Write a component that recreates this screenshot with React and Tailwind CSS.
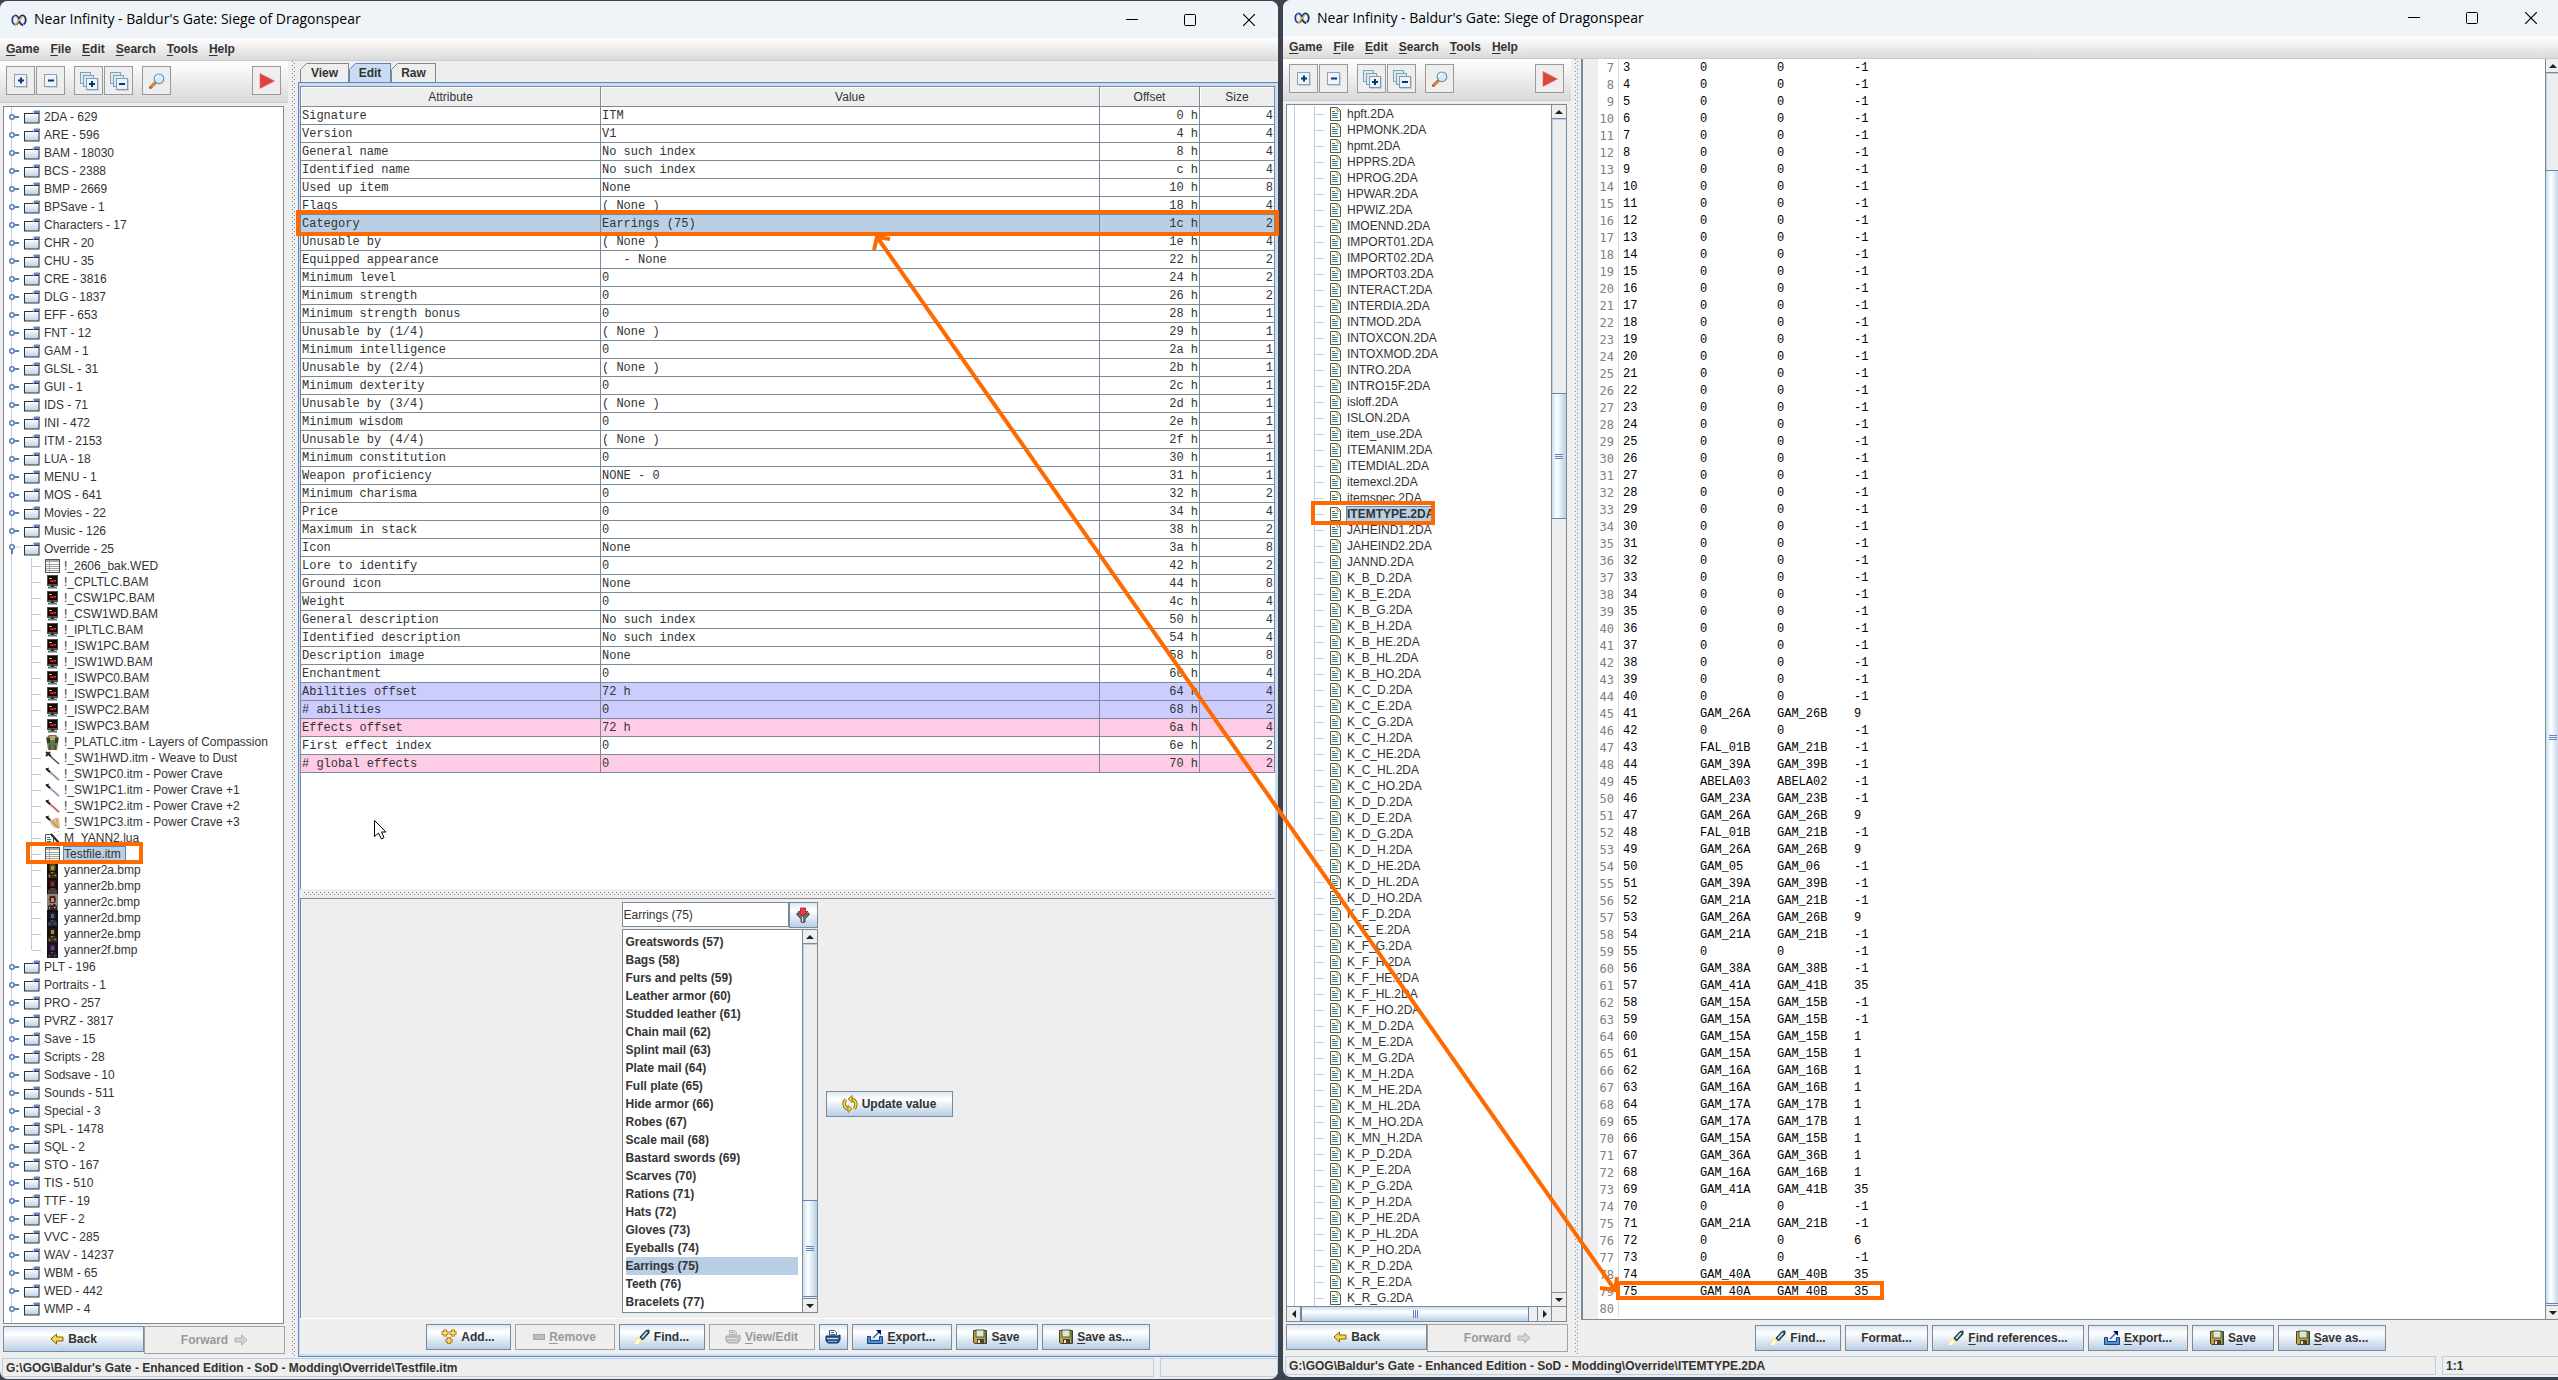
import React from "react";

/* ---------- data ---------- */

const foldersBefore = [
  "2DA - 629", "ARE - 596", "BAM - 18030", "BCS - 2388", "BMP - 2669", "BPSave - 1",
  "Characters - 17", "CHR - 20", "CHU - 35", "CRE - 3816", "DLG - 1837", "EFF - 653",
  "FNT - 12", "GAM - 1", "GLSL - 31", "GUI - 1", "IDS - 71", "INI - 472", "ITM - 2153",
  "LUA - 18", "MENU - 1", "MOS - 641", "Movies - 22", "Music - 126",
];

const foldersAfter = [
  "PLT - 196", "Portraits - 1", "PRO - 257", "PVRZ - 3817", "Save - 15", "Scripts - 28",
  "Sodsave - 10", "Sounds - 511", "Special - 3", "SPL - 1478", "SQL - 2", "STO - 167",
  "TIS - 510", "TTF - 19", "VEF - 2", "VVC - 285", "WAV - 14237", "WBM - 65", "WED - 442",
  "WMP - 4",
];

const overrideFiles = [
  ["grid", "!_2606_bak.WED"],
  ["bam", "!_CPLTLC.BAM"],
  ["bam", "!_CSW1PC.BAM"],
  ["bam", "!_CSW1WD.BAM"],
  ["bam", "!_IPLTLC.BAM"],
  ["bam", "!_ISW1PC.BAM"],
  ["bam", "!_ISW1WD.BAM"],
  ["bam", "!_ISWPC0.BAM"],
  ["bam", "!_ISWPC1.BAM"],
  ["bam", "!_ISWPC2.BAM"],
  ["bam", "!_ISWPC3.BAM"],
  ["armor", "!_PLATLC.itm - Layers of Compassion"],
  ["dagger", "!_SW1HWD.itm - Weave to Dust"],
  ["sword", "!_SW1PC0.itm - Power Crave"],
  ["swordBlue", "!_SW1PC1.itm - Power Crave +1"],
  ["swordRed", "!_SW1PC2.itm - Power Crave +2"],
  ["swordFire", "!_SW1PC3.itm - Power Crave +3"],
  ["script", "M_YANN2.lua"],
  ["grid", "Testfile.itm"],
  ["faceA", "yanner2a.bmp"],
  ["faceB", "yanner2b.bmp"],
  ["faceC", "yanner2c.bmp"],
  ["faceD", "yanner2d.bmp"],
  ["faceE", "yanner2e.bmp"],
  ["faceF", "yanner2f.bmp"],
];

const tableFiles = [
  "hpft", "HPMONK", "hpmt", "HPPRS", "HPROG", "HPWAR", "HPWIZ", "IMOENND", "IMPORT01",
  "IMPORT02", "IMPORT03", "INTERACT", "INTERDIA", "INTMOD", "INTOXCON", "INTOXMOD", "INTRO",
  "INTRO15F", "isloff", "ISLON", "item_use", "ITEMANIM", "ITEMDIAL", "itemexcl", "itemspec",
  "ITEMTYPE", "JAHEIND1", "JAHEIND2", "JANND", "K_B_D", "K_B_E", "K_B_G", "K_B_H", "K_B_HE",
  "K_B_HL", "K_B_HO", "K_C_D", "K_C_E", "K_C_G", "K_C_H", "K_C_HE", "K_C_HL", "K_C_HO",
  "K_D_D", "K_D_E", "K_D_G", "K_D_H", "K_D_HE", "K_D_HL", "K_D_HO", "K_F_D", "K_F_E", "K_F_G",
  "K_F_H", "K_F_HE", "K_F_HL", "K_F_HO", "K_M_D", "K_M_E", "K_M_G", "K_M_H", "K_M_HE",
  "K_M_HL", "K_M_HO", "K_MN_H", "K_P_D", "K_P_E", "K_P_G", "K_P_H", "K_P_HE", "K_P_HL",
  "K_P_HO", "K_R_D", "K_R_E", "K_R_G",
];

const attributes = [
  ["Signature", "ITM", "0 h", "4"],
  ["Version", "V1", "4 h", "4"],
  ["General name", "No such index", "8 h", "4"],
  ["Identified name", "No such index", "c h", "4"],
  ["Used up item", "None", "10 h", "8"],
  ["Flags", "( None )", "18 h", "4"],
  ["Category", "Earrings (75)", "1c h", "2", "selected"],
  ["Unusable by", "( None )", "1e h", "4"],
  ["Equipped appearance", "   - None", "22 h", "2"],
  ["Minimum level", "0", "24 h", "2"],
  ["Minimum strength", "0", "26 h", "2"],
  ["Minimum strength bonus", "0", "28 h", "1"],
  ["Unusable by (1/4)", "( None )", "29 h", "1"],
  ["Minimum intelligence", "0", "2a h", "1"],
  ["Unusable by (2/4)", "( None )", "2b h", "1"],
  ["Minimum dexterity", "0", "2c h", "1"],
  ["Unusable by (3/4)", "( None )", "2d h", "1"],
  ["Minimum wisdom", "0", "2e h", "1"],
  ["Unusable by (4/4)", "( None )", "2f h", "1"],
  ["Minimum constitution", "0", "30 h", "1"],
  ["Weapon proficiency", "NONE - 0", "31 h", "1"],
  ["Minimum charisma", "0", "32 h", "2"],
  ["Price", "0", "34 h", "4"],
  ["Maximum in stack", "0", "38 h", "2"],
  ["Icon", "None", "3a h", "8"],
  ["Lore to identify", "0", "42 h", "2"],
  ["Ground icon", "None", "44 h", "8"],
  ["Weight", "0", "4c h", "4"],
  ["General description", "No such index", "50 h", "4"],
  ["Identified description", "No such index", "54 h", "4"],
  ["Description image", "None", "58 h", "8"],
  ["Enchantment", "0", "60 h", "4"],
  ["Abilities offset", "72 h", "64 h", "4", "violet"],
  ["# abilities", "0", "68 h", "2", "violet"],
  ["Effects offset", "72 h", "6a h", "4", "pink"],
  ["First effect index", "0", "6e h", "2"],
  ["# global effects", "0", "70 h", "2", "pink"],
];

const categories = [
  "Greatswords (57)", "Bags (58)", "Furs and pelts (59)", "Leather armor (60)",
  "Studded leather (61)", "Chain mail (62)", "Splint mail (63)", "Plate mail (64)",
  "Full plate (65)", "Hide armor (66)", "Robes (67)", "Scale mail (68)",
  "Bastard swords (69)", "Scarves (70)", "Rations (71)", "Hats (72)", "Gloves (73)",
  "Eyeballs (74)", "Earrings (75)", "Teeth (76)", "Bracelets (77)",
];

const emptyTypes = Array.from({ length: 38 }, (_, i) => [String(i + 3), "0", "0", "-1"]);

const codeRows = [
  ...emptyTypes,
  ["41", "GAM_26A", "GAM_26B", "9"],
  ["42", "0", "0", "-1"],
  ["43", "FAL_01B", "GAM_21B", "-1"],
  ["44", "GAM_39A", "GAM_39B", "-1"],
  ["45", "ABELA03", "ABELA02", "-1"],
  ["46", "GAM_23A", "GAM_23B", "-1"],
  ["47", "GAM_26A", "GAM_26B", "9"],
  ["48", "FAL_01B", "GAM_21B", "-1"],
  ["49", "GAM_26A", "GAM_26B", "9"],
  ["50", "GAM_05", "GAM_06", "-1"],
  ["51", "GAM_39A", "GAM_39B", "-1"],
  ["52", "GAM_21A", "GAM_21B", "-1"],
  ["53", "GAM_26A", "GAM_26B", "9"],
  ["54", "GAM_21A", "GAM_21B", "-1"],
  ["55", "0", "0", "-1"],
  ["56", "GAM_38A", "GAM_38B", "-1"],
  ["57", "GAM_41A", "GAM_41B", "35"],
  ["58", "GAM_15A", "GAM_15B", "-1"],
  ["59", "GAM_15A", "GAM_15B", "-1"],
  ["60", "GAM_15A", "GAM_15B", "1"],
  ["61", "GAM_15A", "GAM_15B", "1"],
  ["62", "GAM_16A", "GAM_16B", "1"],
  ["63", "GAM_16A", "GAM_16B", "1"],
  ["64", "GAM_17A", "GAM_17B", "1"],
  ["65", "GAM_17A", "GAM_17B", "1"],
  ["66", "GAM_15A", "GAM_15B", "1"],
  ["67", "GAM_36A", "GAM_36B", "1"],
  ["68", "GAM_16A", "GAM_16B", "1"],
  ["69", "GAM_41A", "GAM_41B", "35"],
  ["70", "0", "0", "-1"],
  ["71", "GAM_21A", "GAM_21B", "-1"],
  ["72", "0", "0", "6"],
  ["73", "0", "0", "-1"],
  ["74", "GAM_40A", "GAM_40B", "35"],
  ["75", "GAM_40A", "GAM_40B", "35"],
  ["", "", "", ""],
];

/* ---------- icons ---------- */

function Icon({ w = 16, h = 16, children, className = "" }) {
  return (
    <svg width={w} height={h} viewBox={`0 0 ${w} ${h}`} fill="none" aria-hidden="true" className={`shrink-0 ${className}`}>
      {children}
    </svg>
  );
}

const LogoIcon = () => (
  <Icon>
    <ellipse cx="4.5" cy="8" rx="3.2" ry="4.6" stroke="#1d3f94" strokeWidth="1.8" />
    <ellipse cx="11.5" cy="8" rx="3.2" ry="4.6" stroke="#14275e" strokeWidth="1.8" />
    <path d="M3 3.5 8 8l5 5" stroke="#9db4e0" />
    <path d="M4 13.5 11 4.5" stroke="#e0a92e" strokeWidth="1.6" />
    <path d="M9 11.5 12 14" stroke="#14275e" />
  </Icon>
);

const BoxIcon = ({ plus }) => (
  <Icon>
    <rect x="3" y="3" width="12" height="12" fill="#00000022" />
    <rect x="1.5" y="1.5" width="12" height="12" fill="#eef3f8" stroke="#8aa3bd" />
    <path d="M5 7.5h6" stroke="#003a78" strokeWidth="2" />
    {plus && <path d="M8 4.5v6" stroke="#003a78" strokeWidth="2" />}
  </Icon>
);

const StackIcon = ({ plus }) => (
  <Icon w={20} h={20}>
    <rect x="1.5" y="1.5" width="10" height="11" fill="#dcebf2" stroke="#7fa3b5" />
    <rect x="4.5" y="4.5" width="10" height="11" fill="#dcebf2" stroke="#7fa3b5" />
    <rect x="8" y="8" width="12" height="12" fill="#00000022" />
    <rect x="7.5" y="7.5" width="11" height="11" fill="#eef3f8" stroke="#7f9bb8" />
    <path d="M10 13h6" stroke="#003a78" strokeWidth="2" />
    {plus && <path d="M13 10v6" stroke="#003a78" strokeWidth="2" />}
  </Icon>
);

const SearchIcon = () => (
  <Icon>
    <path d="M6 10 1.5 14.5" stroke="#b5561c" strokeWidth="3" strokeLinecap="round" />
    <path d="M6 10 2 14" stroke="#f0a04a" strokeWidth="1.2" />
    <circle cx="10" cy="5.8" r="4.8" fill="#d3ecfa" stroke="#6d93ae" strokeWidth="1.2" />
    <path d="M7 6a3 3 0 0 1 3-3" stroke="#ffffff" strokeWidth="1.4" />
  </Icon>
);

const PlayIcon = () => (
  <Icon>
    <path d="M1 .5 15.5 8 1 15.5Z" fill="#dc4440" stroke="#e06a66" strokeWidth=".6" />
  </Icon>
);

const FolderIcon = () => (
  <Icon w={16} h={14}>
    <rect x=".5" y="3.5" width="14.5" height="9.5" fill="url(#folderFill)" stroke="#333" />
    <path d="M9 2.5 10 1h6v11" stroke="#6382bf" />
    <path d="M9.5 3 11 1h5v2Z" fill="#6382bf" />
    <path d="M1.5 4.5h7l1-1" stroke="#fff" />
  </Icon>
);

const HandleIcon = ({ open }) =>
  open ? (
    <Icon w={12} h={12}>
      <circle cx="3" cy="4" r="2.2" stroke="#5b7dbb" strokeWidth="1.6" fill="#fff" />
      <path d="M3 6.5V11" stroke="#5b7dbb" strokeWidth="2" />
      <path d="M6 4h6" stroke="#b8cfe5" />
    </Icon>
  ) : (
    <Icon w={12} h={12}>
      <circle cx="3" cy="6" r="2.2" stroke="#5b7dbb" strokeWidth="1.6" fill="#fff" />
      <path d="M5.5 6H10" stroke="#5b7dbb" strokeWidth="2" />
    </Icon>
  );

const DocIcon = () => (
  <Icon w={11} h={14}>
    <path d="M.5 .5h7l3 3v10H.5Z" fill="#fbfbf4" stroke="#55554a" />
    <path d="M7 .5v3.500h3.500" stroke="#a08a50" />
    <path d="M2 4.5h3M2 6.5h6M2 8.5h5M2 10.5h6" stroke="#2c7a78" />
  </Icon>
);

const Face = ({ skin, hair, body, bg }) => (
  <Icon w={11} h={16} className="mx-[2px]">
    <rect width="11" height="16" fill={bg} />
    <path d="M3 2h5l1 3-1 4H3L2 5Z" fill={hair} />
    <rect x="4" y="4" width="3" height="4" fill={skin} />
    <path d="M1 16v-4l3-2h4l2 2v4Z" fill={body} />
    <path d="M4 10h2v1H4zM7 13h2v1H7zM2 13h1v2H2z" fill={skin} />
  </Icon>
);

const Blade = ({ color, hilt = "#1d1a14", glow }) => (
  <Icon w={15} h={14}>
    {glow && <path d="M5 6c3-3 8-4 9-3l1 9c-4 3-9 0-10-6Z" fill="#e9c496" />}
    {glow && <path d="M8 5l5 7M11 3l2 8" stroke="#c99a63" />}
    <path d="M4 4 14 13" stroke={color} strokeWidth="1.8" />
    <path d="M5 4 14 12" stroke="#ffffff" strokeWidth=".7" opacity=".6" />
    <path d="M1 1.5 5 5" stroke={hilt} strokeWidth="2" />
    <path d="M1 2.5 4 1" stroke={hilt} />
  </Icon>
);

const fileIcons = {
  grid: (
    <Icon w={15} h={14}>
      <rect x=".5" y=".5" width="14" height="13" fill="#fff" stroke="#55554f" />
      <rect x="1" y="1" width="13" height="2" fill="#a6a6a0" />
      <path d="M1 5.5h13M1 7.5h13M1 9.5h13M1 11.5h13M4.5 3v10" stroke="#a4a49e" />
    </Icon>
  ),
  bam: (
    <Icon w={15} h={14}>
      <rect x="2" y="0" width="11" height="11" fill="#4c4c48" />
      <rect x="3" y="1" width="9" height="8" fill="#0b0a10" />
      <path d="M4 3.5h3" stroke="#e8b414" strokeWidth="1" />
      <path d="M5 6h6" stroke="#cf1515" strokeWidth="2" />
      <path d="M3 12.5h9" stroke="#6a6a66" strokeWidth="2" />
      <rect x="6" y="10" width="3" height="2" fill="#2c2c2a" />
    </Icon>
  ),
  armor: (
    <Icon w={15} h={15}>
      <path d="M4 0h7l3 3-1 5-1 7H3L2 8 1 3Z" fill="#7a6f4c" />
      <path d="M5 1h5l1 4H4Z" fill="#b5a878" />
      <path d="M2 3h3v5H2zM10 3h3v5h-3z" fill="#3d3a2c" />
      <path d="M6 6h3v6H6z" fill="#2e9340" />
      <path d="M4 10h2v5H4zM9 10h2v5H9z" fill="#57503a" />
    </Icon>
  ),
  dagger: (
    <Icon w={15} h={14}>
      <path d="M4 4 14 13" stroke="#4b5563" strokeWidth="1.5" />
      <path d="M1 1 6 5M1 5 5 1" stroke="#20261c" strokeWidth="2" />
    </Icon>
  ),
  sword: <Blade color="#8a8a80" />,
  swordBlue: <Blade color="#8696b4" />,
  swordRed: <Blade color="#c5564e" />,
  swordFire: <Blade color="#b58a60" glow />,
  script: (
    <Icon w={15} h={15}>
      <path d="M.5 3.5h6l2 2v9h-8Z" fill="#fbfbf4" stroke="#55554a" />
      <path d="M2 6.5h3M2 8.5h4M2 10.5h4M2 12.5h4" stroke="#2c7a78" />
      <path d="M6 3 14 12" stroke="#22222c" strokeWidth="2" />
      <path d="M9 1h1v1H9zM13 0h1v1h-1zM12 4h1v1h-1zM14 3h1v1h-1z" fill="#dfb21c" />
    </Icon>
  ),
  faceA: <Face skin="#b98a4a" hair="#5c4a1c" body="#3a3118" bg="#15120c" />,
  faceB: <Face skin="#7a3a34" hair="#3a1614" body="#4a3a40" bg="#160c10" />,
  faceC: <Face skin="#c98c6c" hair="#4a2218" body="#402a28" bg="#8a8480" />,
  faceD: <Face skin="#5d5a6c" hair="#20202c" body="#28304a" bg="#0e1018" />,
  faceE: <Face skin="#b0804c" hair="#2a1c10" body="#3c3220" bg="#14100a" />,
  faceF: <Face skin="#6a4a6c" hair="#30183c" body="#28202c" bg="#181020" />,
};

const BackArrow = () => (
  <Icon w={14} h={12}>
    <path d="M1 6 6.5 1v3H13v4H6.5v3Z" fill="#f8dc3c" stroke="#8a5a1c" />
  </Icon>
);

const ForwardArrow = () => (
  <Icon w={14} h={12}>
    <path d="M13 6 7.5 1v3H1v4h6.5v3Z" fill="#d4d4d4" stroke="#b0b0b0" />
  </Icon>
);

const AddIcon = () => (
  <Icon>
    {[[4, 4], [12, 4], [8, 11.5]].map(([x, y]) => (
      <g key={`${x}-${y}`}>
        <path d={`M${x - 3.5} ${y}h7M${x} ${y - 3.5}v7`} stroke="#a8641c" strokeWidth="3.6" />
        <path d={`M${x - 2.7} ${y}h5.4M${x} ${y - 2.7}v5.400`} stroke="#fbe04c" strokeWidth="1.8" />
      </g>
    ))}
  </Icon>
);

const RemoveIcon = () => (
  <Icon w={12} h={8}>
    <rect x=".5" y="1.5" width="11" height="5" fill="#bdbdbd" stroke="#a6a6a6" />
  </Icon>
);

const TorchIcon = () => (
  <Icon>
    <path d="M0 15 2 9l3-1 3 2-2 5Z" fill="#fbe98c" />
    <path d="M1 15 4 10l2 1-2 4Z" fill="#fff" />
    <path d="M6 8 12 1.5l3-.5v3L8.500 11Z" fill="#2f6f7c" stroke="#1c2430" />
    <path d="M8 8.5 13 3" stroke="#d8ecf4" strokeWidth="1.2" />
  </Icon>
);

const PrintIcon = ({ off }) => (
  <Icon>
    <path d="M4.5 6V1.500h5l2 2V6Z" fill={off ? "#d8d8d8" : "#fff"} stroke={off ? "#b4b4b4" : "#3f5a6a"} />
    <path d="M6 3.5h3M6 5.5h4" stroke={off ? "#b4b4b4" : "#2c7a78"} />
    <path d="M1 7h12l2-1v5l-2 3H3l-2-2Z" fill={off ? "#c0c0c0" : "#2f5fa0"} stroke={off ? "#aaa" : "#14294a"} />
    <path d="M2 9.5h11" stroke={off ? "#e0e0e0" : "#cfe0f4"} />
    <path d="M3 12.5h9" stroke={off ? "#d8d8d8" : "#86a8d8"} />
  </Icon>
);

const ExportIcon = () => (
  <Icon>
    <path d="M.5 7.500v7h15v-7h-3v4h-9v-4Z" fill="#4f93cc" stroke="#1c3f8c" />
    <path d="M6 9 12 3" stroke="#3c4ca0" strokeWidth="1.3" />
    <path d="M9 1h5v5Z" fill="#000080" />
  </Icon>
);

const SaveIcon = () => (
  <Icon w={14} h={16}>
    <path d="M.5 1.5h13v13H2l-1.500-1Z" fill="#c8a23c" stroke="#3f3f34" />
    <rect x="3" y="1" width="8" height="7" fill="#dfe8c8" stroke="#4c5a48" />
    <rect x="4" y="10" width="7" height="5" fill="#4a4038" />
    <rect x="5" y="11" width="2" height="3" fill="#e8e0d0" />
    <path d="M12.5 2v12" stroke="#4c7a4c" />
  </Icon>
);

const UpdateIcon = () => (
  <Icon w={16} h={18}>
    <path d="M6.5 14A5.5 5.5 0 0 1 4 4.5M9.5 4A5.5 5.5 0 0 1 12 13.5" stroke="#8a6a1c" strokeWidth="3.4" />
    <path d="M6.5 14A5.5 5.5 0 0 1 4 4.5M9.5 4A5.5 5.5 0 0 1 12 13.5" stroke="#f6d83c" strokeWidth="1.6" />
    <path d="M10 .5v7L6 4Z" fill="#f6d83c" stroke="#8a6a1c" strokeWidth=".8" />
    <path d="M6 10.500v7l4-3.500Z" fill="#f6d83c" stroke="#8a6a1c" strokeWidth=".8" />
  </Icon>
);

const FilterIcon = () => (
  <Icon>
    <path d="M2 6h12v2L10 12v3l-2 1-2-1v-3L2 8Z" fill="#6e6e6e" stroke="#3a3a3a" strokeWidth=".8" />
    <path d="M7.5 10v5" stroke="#e4e4e4" />
    <path d="M5.500 1h5v3.500h2.500L8 9 3 4.500h2.500Z" fill="#ee3a44" stroke="#a01820" strokeWidth=".8" />
  </Icon>
);

/* ---------- shared pieces ---------- */

function Mnemonic({ text, at = 0 }) {
  if (at < 0) return text;
  return (
    <span>
      {text.slice(0, at)}
      <span className="underline underline-offset-2">{text[at]}</span>
      {text.slice(at + 1)}
    </span>
  );
}

function MetalButton({ icon, text, at = -1, disabled, className = "" }) {
  return (
    <button
      type="button"
      disabled={disabled}
      className={`flex h-[26px] items-center justify-center gap-1 border text-xs font-bold whitespace-nowrap ${
        disabled
          ? "border-[#a3a3a3] bg-[#eeeeee] text-[#999999]"
          : "border-[#7a8a99] bg-linear-to-b from-[#dde8f3] via-white via-30% to-[#b8cfe5] text-[#333333]"
      } ${className}`}
    >
      {icon}
      <Mnemonic text={text} at={at} />
    </button>
  );
}

function ToolButton({ label, children, className = "" }) {
  return (
    <button
      type="button"
      aria-label={label}
      className={`flex size-[29px] items-center justify-center border border-[#999999] bg-[#eeeeee] ${className}`}
    >
      {children}
    </button>
  );
}

function Dots({ id, className }) {
  return (
    <svg className={className} aria-hidden="true" shapeRendering="crispEdges">
      <defs>
        <pattern id={id} width="4" height="4" patternUnits="userSpaceOnUse">
          <rect x="0" y="0" width="1" height="1" fill="#7a8a99" />
          <rect x="2" y="2" width="1" height="1" fill="#7a8a99" />
        </pattern>
      </defs>
      <rect width="100%" height="100%" fill={`url(#${id})`} />
    </svg>
  );
}

function ScrollArrow({ label, d, className = "" }) {
  return (
    <button
      type="button"
      aria-label={label}
      className={`flex size-[14px] shrink-0 items-center justify-center bg-[#eeeeee] ${className}`}
    >
      <Icon w={8} h={8}>
        <path d={d} fill="#222" />
      </Icon>
    </button>
  );
}

const UP = "M4 2 8 6H0Z";
const DOWN = "M0 2h8L4 6Z";
const LEFT = "M2 4 6 0v8Z";
const RIGHT = "M6 4 2 0v8Z";

function VScroll({ before, thumb, after }) {
  return (
    <div className="flex w-[15px] shrink-0 flex-col border-l border-[#7a8a99] bg-[#eeeeee]">
      <ScrollArrow label="Scroll up" d={UP} className="border-b border-[#7a8a99]" />
      <div style={{ flexGrow: before }} className="basis-0 shadow-[inset_1px_1px_0_#b8cfe5]" />
      <div
        style={{ flexGrow: thumb }}
        className="flex basis-0 items-center justify-center border-y border-[#6382bf] bg-linear-to-r from-[#c8ddf2] via-white via-35% to-[#b8cfe5]"
      >
        <div className="flex flex-col gap-px">
          <div className="h-px w-2 bg-[#6382bf]" />
          <div className="h-px w-2 bg-[#6382bf]" />
          <div className="h-px w-2 bg-[#6382bf]" />
        </div>
      </div>
      <div style={{ flexGrow: after }} className="basis-0" />
      <ScrollArrow label="Scroll down" d={DOWN} className="border-t border-[#7a8a99]" />
    </div>
  );
}

function HScroll() {
  return (
    <div className="flex h-[15px] shrink-0 border-t border-[#7a8a99] bg-[#eeeeee]">
      <ScrollArrow label="Scroll left" d={LEFT} className="border-r border-[#7a8a99]" />
      <div className="flex grow-[226] basis-0 items-center justify-center gap-px border-x border-[#6382bf] bg-linear-to-b from-[#c8ddf2] via-white via-35% to-[#b8cfe5]">
        <div className="h-2 w-px bg-[#6382bf]" />
        <div className="h-2 w-px bg-[#6382bf]" />
        <div className="h-2 w-px bg-[#6382bf]" />
      </div>
      <div className="grow-[8] basis-0" />
      <ScrollArrow label="Scroll right" d={RIGHT} className="border-l border-[#7a8a99]" />
      <div className="w-[15px] shrink-0 border-l border-[#7a8a99]" />
    </div>
  );
}

function FileRow({ icon, name, selected, last, bold }) {
  return (
    <li role="treeitem" aria-selected={!!selected} className="flex h-4 items-center">
      <span className={`ml-[19px] w-px shrink-0 bg-[#b8cfe5] ${last ? "h-2 self-start" : "h-4"}`} />
      <span className="h-px w-[9px] shrink-0 bg-[#b8cfe5]" />
      <span className="mr-1 ml-[4px] flex w-[15px] shrink-0 justify-center">{icon}</span>
      <span
        className={`leading-[14px] whitespace-nowrap ${
          selected ? "bg-[#b8cfe5] outline outline-[#6382bf]" : ""
        } ${bold ? "font-bold" : "pr-1"}`}
      >
        {name}
      </span>
    </li>
  );
}

function FolderRow({ name, open }) {
  return (
    <li role="treeitem" aria-selected="false" className="-ml-[3px] flex h-[18px] items-center">
      <HandleIcon open={open} />
      <span className="ml-[3px] flex">
        <FolderIcon />
      </span>
      <span className="ml-1 whitespace-nowrap">{name}</span>
    </li>
  );
}

function TitleBar({ className }) {
  return (
    <header className={`flex shrink-0 items-center bg-[#eff4f9] pl-[11px] ${className}`}>
      <LogoIcon />
      <h1 className="ml-[7px] grow font-['Open_Sans',sans-serif] text-[14px] text-black">
        Near Infinity - Baldur's Gate: Siege of Dragonspear
      </h1>
      <div className="flex text-black">
        <button type="button" aria-label="Minimize" className="flex w-[59px] justify-center">
          <Icon w={12} h={12}><path d="M0 5.5h12" stroke="#000" /></Icon>
        </button>
        <button type="button" aria-label="Maximize" className="flex w-[58px] justify-center">
          <Icon w={12} h={12}><rect x=".5" y=".5" width="11" height="11" rx="1" stroke="#000" /></Icon>
        </button>
        <button type="button" aria-label="Close" className="flex w-[59px] justify-center">
          <Icon w={12} h={12}><path d="M0 0 12 12M12 0 0 12" stroke="#000" strokeWidth="1.2" /></Icon>
        </button>
      </div>
    </header>
  );
}

function MenuBar() {
  return (
    <nav className="flex h-[23px] shrink-0 items-center gap-[11px] border-b border-[#cccccc] bg-linear-to-b from-white to-[#dadada] pl-[6px] font-bold">
      {["Game", "File", "Edit", "Search", "Tools", "Help"].map((m) => (
        <button type="button" key={m}>
          <Mnemonic text={m} />
        </button>
      ))}
    </nav>
  );
}

function SidePane({ children }) {
  return (
    <aside className="flex w-[288px] shrink-0 flex-col">
      <div className="flex h-[42px] shrink-0 items-start border-b border-[#cccccc] bg-linear-to-b from-white to-[#dadada] pt-[5px] pr-[7px] pl-[6px]">
        <ToolButton label="Expand"><BoxIcon plus /></ToolButton>
        <ToolButton label="Collapse" className="ml-px"><BoxIcon /></ToolButton>
        <ToolButton label="Expand all" className="ml-[9px]"><StackIcon plus /></ToolButton>
        <ToolButton label="Collapse all" className="ml-px"><StackIcon /></ToolButton>
        <ToolButton label="Find resource" className="ml-[9px]"><SearchIcon /></ToolButton>
        <ToolButton label="Launch game" className="ml-auto"><PlayIcon /></ToolButton>
      </div>
      <div className="mr-1 mt-[3px] mb-[2px] ml-[3px] flex min-h-0 grow border border-[#7a8a99] bg-white">{children}</div>
      <div className="mx-[3px] mb-[3px] grid shrink-0 grid-cols-2">
        <MetalButton icon={<BackArrow />} text="Back" className="h-7" />
        <button
          type="button"
          disabled
          className="flex h-7 items-center justify-center gap-[6px] border border-[#a3a3a3] bg-[#eeeeee] font-bold text-[#999999]"
        >
          Forward
          <ForwardArrow />
        </button>
      </div>
    </aside>
  );
}

function StatusBar({ path, position }) {
  return (
    <footer className="flex h-[22px] shrink-0 gap-[6px] pt-px pb-[2px] pl-[2px] font-bold">
      <div className="flex grow items-center border border-[#b8cfe5] pl-[3px]">{path}</div>
      <div className="flex w-[118px] items-center border border-[#b8cfe5] pl-[3px]">{position}</div>
    </footer>
  );
}

/* ---------- item editor window ---------- */

const rowColors = {
  selected: "bg-[#b8cfe5]",
  violet: "bg-[#ccccff]",
  pink: "bg-[#ffcce6]",
};

function AttributeTable() {
  const head = "h-5 border-r border-b border-[#7a8a99] bg-[#eeeeee] p-0 pt-px text-center font-normal shadow-[inset_1px_1px_0_#ffffff]";
  const cell = "h-[18px] border-r border-b border-[#7a8a99] p-0 pt-[2px] leading-[15px] whitespace-pre";
  return (
    <table className="w-full table-fixed border-separate border-spacing-0 border-t border-l border-[#7a8a99]">
      <colgroup>
        <col className="w-[300px]" />
        <col />
        <col className="w-[100px]" />
        <col className="w-[75px]" />
      </colgroup>
      <thead>
        <tr>
          <th className={head}>Attribute</th>
          <th className={head}>Value</th>
          <th className={head}>Offset</th>
          <th className={head}>Size</th>
        </tr>
      </thead>
      <tbody className="font-['Liberation_Mono',monospace]">
        {attributes.map(([name, value, offset, size, tone]) => (
          <tr key={name} className={rowColors[tone] || "bg-white"}>
            <td className={`${cell} pl-px`}>{name}</td>
            <td className={`${cell} pl-px`}>{value}</td>
            <td className={`${cell} pr-px text-right`}>{offset}</td>
            <td className={`${cell} pr-px text-right`}>{size}</td>
          </tr>
        ))}
      </tbody>
    </table>
  );
}

function Tab({ label, active, className }) {
  return (
    <button type="button" role="tab" aria-selected={!!active} className={`relative h-full text-center font-bold ${className}`}>
      <svg className="absolute inset-0 size-full" aria-hidden="true">
        <rect x="0" y="6" width="100%" height="100%" fill={active ? "#c8ddf2" : "#eeeeee"} />
        <rect x="6" y="0" width="100%" height="100%" fill={active ? "#c8ddf2" : "#eeeeee"} />
        <path d="M.5 30V6.5L6.5 .5H200" fill={active ? "#c8ddf2" : "#eeeeee"} stroke={active ? "#6382bf" : "#7a8a99"} />
      </svg>
      <span className={`absolute inset-y-0 right-0 w-px ${active ? "bg-[#6382bf]" : "bg-[#7a8a99]"}`} />
      <span className="relative">{label}</span>
    </button>
  );
}

function ItemEditor() {
  return (
    <main className="flex min-w-0 grow flex-col">
      <div role="tablist" className="flex h-[21px] shrink-0 pt-[2px] pl-[2px]">
        <Tab label="View" className="w-[49px]" />
        <Tab label="Edit" active className="w-[42px]" />
        <Tab label="Raw" className="w-[45px]" />
      </div>
      <div className="flex min-h-0 grow flex-col border-t border-b border-l border-[#6382bf] bg-[#c8ddf2] pt-[3px] pr-[3px] pb-[2px] pl-px">
        <section className="min-h-0 grow overflow-hidden border-l border-[#7a8a99] bg-white">
          <div className="-ml-px">
            <AttributeTable />
          </div>
        </section>
        <div className="flex h-[9px] shrink-0 items-center bg-[#eeeeee] px-1">
          <Dots id="dots-split" className="h-[3px] w-full" />
        </div>
        <section className="flex shrink-0 justify-center gap-2 border-t border-l border-[#7a8a99] bg-[#eeeeee] pt-[3px] pr-[2px] pb-[5px]">
          <div className="w-[196px]">
            <div className="flex">
              <input
                aria-label="Filter"
                defaultValue="Earrings (75)"
                className="h-[25px] w-[167px] border border-[#7a8a99] bg-white px-px text-xs text-[#333333] outline-none"
              />
              <button
                type="button"
                aria-label="Apply filter"
                className="flex h-[26px] grow items-center justify-center border border-[#7a8a99] bg-linear-to-b from-[#dde8f3] via-white via-30% to-[#b8cfe5]"
              >
                <FilterIcon />
              </button>
            </div>
            <div className="mt-px flex border border-[#7a8a99] bg-white">
              <ul role="listbox" aria-label="Category" className="grow pt-[3px] pr-1 pb-px pl-[3px] font-bold">
                {categories.map((c) => {
                  const on = c === "Earrings (75)";
                  return (
                    <li key={c} role="option" aria-selected={on} className={`h-[18px] leading-[18px] ${on ? "bg-[#b8cfe5]" : ""}`}>
                      {c}
                    </li>
                  );
                })}
              </ul>
              <VScroll before={257} thumb={95} after={1} />
            </div>
          </div>
          <div className="flex items-center pb-2">
            <MetalButton icon={<UpdateIcon />} text="Update value" className="w-[127px]" />
          </div>
        </section>
        <div className="flex shrink-0 justify-center gap-1 border-t border-white bg-[#eeeeee] pt-[5px] pb-1">
          <MetalButton icon={<AddIcon />} text="Add..." className="w-[85px]" />
          <MetalButton icon={<RemoveIcon />} text="Remove" at={0} disabled className="w-[100px]" />
          <MetalButton icon={<TorchIcon />} text="Find..." className="w-[86px]" />
          <MetalButton icon={<PrintIcon off />} text="View/Edit" at={0} disabled className="w-[106px]" />
          <button
            type="button"
            aria-label="Print"
            className="flex h-[26px] w-[29px] items-center justify-center border border-[#7a8a99] bg-linear-to-b from-[#dde8f3] via-white via-30% to-[#b8cfe5]"
          >
            <PrintIcon />
          </button>
          <MetalButton icon={<ExportIcon />} text="Export..." at={0} className="w-[100px]" />
          <MetalButton icon={<SaveIcon />} text="Save" at={1} className="w-[82px]" />
          <MetalButton icon={<SaveIcon />} text="Save as..." at={0} className="w-[108px]" />
        </div>
      </div>
    </main>
  );
}

/* ---------- 2DA text window ---------- */

function TextEditor() {
  const cell = "p-0 pt-px leading-4";
  return (
    <main className="flex min-w-0 grow flex-col">
      <section className="flex min-h-0 grow overflow-hidden border-b border-l-2 border-[#7a8a99] bg-white">
        <div className="w-[15px] shrink-0 bg-[#eeeeee]" />
        <div className="min-w-0 grow overflow-hidden">
          <table className="border-separate border-spacing-0 font-['Liberation_Mono',monospace]">
            <tbody>
              {codeRows.map(([id, a, b, n], i) => (
                <tr key={i} className="text-black">
                  <td className="h-[17px] w-[21px] border-r border-[#dddddd] p-0 pt-px pr-1 text-right font-['DejaVu_Sans_Mono',monospace] leading-4 text-[#808080]">
                    {i + 7}
                  </td>
                  <td className={`w-[81px] pl-1 ${cell}`}>{id}</td>
                  <td className={`w-[77px] ${cell}`}>{a}</td>
                  <td className={`w-[77px] ${cell}`}>{b}</td>
                  <td className={`w-[40px] ${cell}`}>{n}</td>
                </tr>
              ))}
            </tbody>
          </table>
        </div>
        <VScroll before={97} thumb={1131} after={1} />
      </section>
      <div className="flex shrink-0 justify-center gap-1 pt-[5px] pb-1">
        <MetalButton icon={<TorchIcon />} text="Find..." className="w-[86px]" />
        <MetalButton text="Format..." className="w-[83px]" />
        <MetalButton icon={<TorchIcon />} text="Find references..." at={0} className="w-[152px]" />
        <MetalButton icon={<ExportIcon />} text="Export..." at={0} className="w-[100px]" />
        <MetalButton icon={<SaveIcon />} text="Save" at={1} className="w-[82px]" />
        <MetalButton icon={<SaveIcon />} text="Save as..." at={0} className="w-[108px]" />
      </div>
    </main>
  );
}

function Splitter({ id }) {
  return (
    <div className="flex w-[10px] shrink-0 justify-center">
      <Dots id={id} className="h-full w-[3px]" />
    </div>
  );
}

/* ---------- marks over the desktop ---------- */

function Annotations() {
  return (
    <svg className="pointer-events-none absolute inset-0 size-full" aria-hidden="true" fill="none">
      <g stroke="#ff6a00" strokeWidth="4">
        <rect x="298" y="212" width="979" height="22" />
        <rect x="28" y="844" width="113" height="18" />
        <rect x="1313" y="503" width="120" height="20" />
        <rect x="1618" y="1283" width="264" height="15" />
        <path d="M877 237 1615 1290" />
        <path d="M874 250 877 237 890 239M1600 1288 1615 1290 1617 1277" />
      </g>
      <path d="M374.5 820.5v16l4-3.5 3 6 2.5-1.5-2.5-5.500h4.500Z" fill="#fff" stroke="#000" />
    </svg>
  );
}

export default function App() {
  return (
    <div className="relative flex h-screen gap-[5px] overflow-hidden bg-[#3d4450] font-['Liberation_Sans',Arial,sans-serif] text-xs text-[#333333]">
      <svg width="0" height="0" className="absolute" aria-hidden="true">
        <defs>
          <linearGradient id="folderFill" x1="0" y1="0" x2="0" y2="1">
            <stop offset="0" stopColor="#ffffff" />
            <stop offset="1" stopColor="#b8cfe5" />
          </linearGradient>
        </defs>
      </svg>

      <div className="my-px flex min-w-0 grow-[1278] basis-0 flex-col overflow-hidden rounded-lg bg-[#eeeeee]">
        <TitleBar className="h-[37px]" />
        <MenuBar />
        <div className="flex min-h-0 grow">
          <SidePane>
            <ul role="tree" className="ml-[7px] grow border-l border-[#b8cfe5] pt-px">
              {foldersBefore.map((f) => <FolderRow key={f} name={f} />)}
              <FolderRow name="Override - 25" open />
              {overrideFiles.map(([kind, name], i) => (
                <FileRow
                  key={name}
                  icon={fileIcons[kind]}
                  name={name}
                  selected={name === "Testfile.itm"}
                  last={i === overrideFiles.length - 1}
                />
              ))}
              {foldersAfter.map((f) => <FolderRow key={f} name={f} />)}
            </ul>
          </SidePane>
          <Splitter id="dots-left" />
          <ItemEditor />
        </div>
        <StatusBar path="G:\GOG\Baldur's Gate - Enhanced Edition - SoD - Modding\Override\Testfile.itm" />
      </div>

      <div className="-mr-[2px] mb-[3px] flex min-w-0 grow-[1277] basis-0 flex-col overflow-hidden rounded-l-lg bg-[#eeeeee]">
        <TitleBar className="h-9" />
        <MenuBar />
        <div className="flex min-h-0 grow">
          <SidePane>
            <div className="flex min-w-0 grow flex-col">
              <div className="flex min-h-0 grow">
                <div className="min-w-0 grow overflow-hidden">
                  <ul role="tree" className="ml-[7px] border-l border-[#b8cfe5] pt-px">
                    {tableFiles.map((f) => (
                      <FileRow key={f} icon={<DocIcon />} name={`${f}.2DA`} selected={f === "ITEMTYPE"} bold={f === "ITEMTYPE"} />
                    ))}
                  </ul>
                </div>
                <VScroll before={274} thumb={124} after={772} />
              </div>
              <HScroll />
            </div>
          </SidePane>
          <Splitter id="dots-right" />
          <TextEditor />
        </div>
        <StatusBar path="G:\GOG\Baldur's Gate - Enhanced Edition - SoD - Modding\Override\ITEMTYPE.2DA" position="1:1" />
      </div>

      <Annotations />
    </div>
  );
}
